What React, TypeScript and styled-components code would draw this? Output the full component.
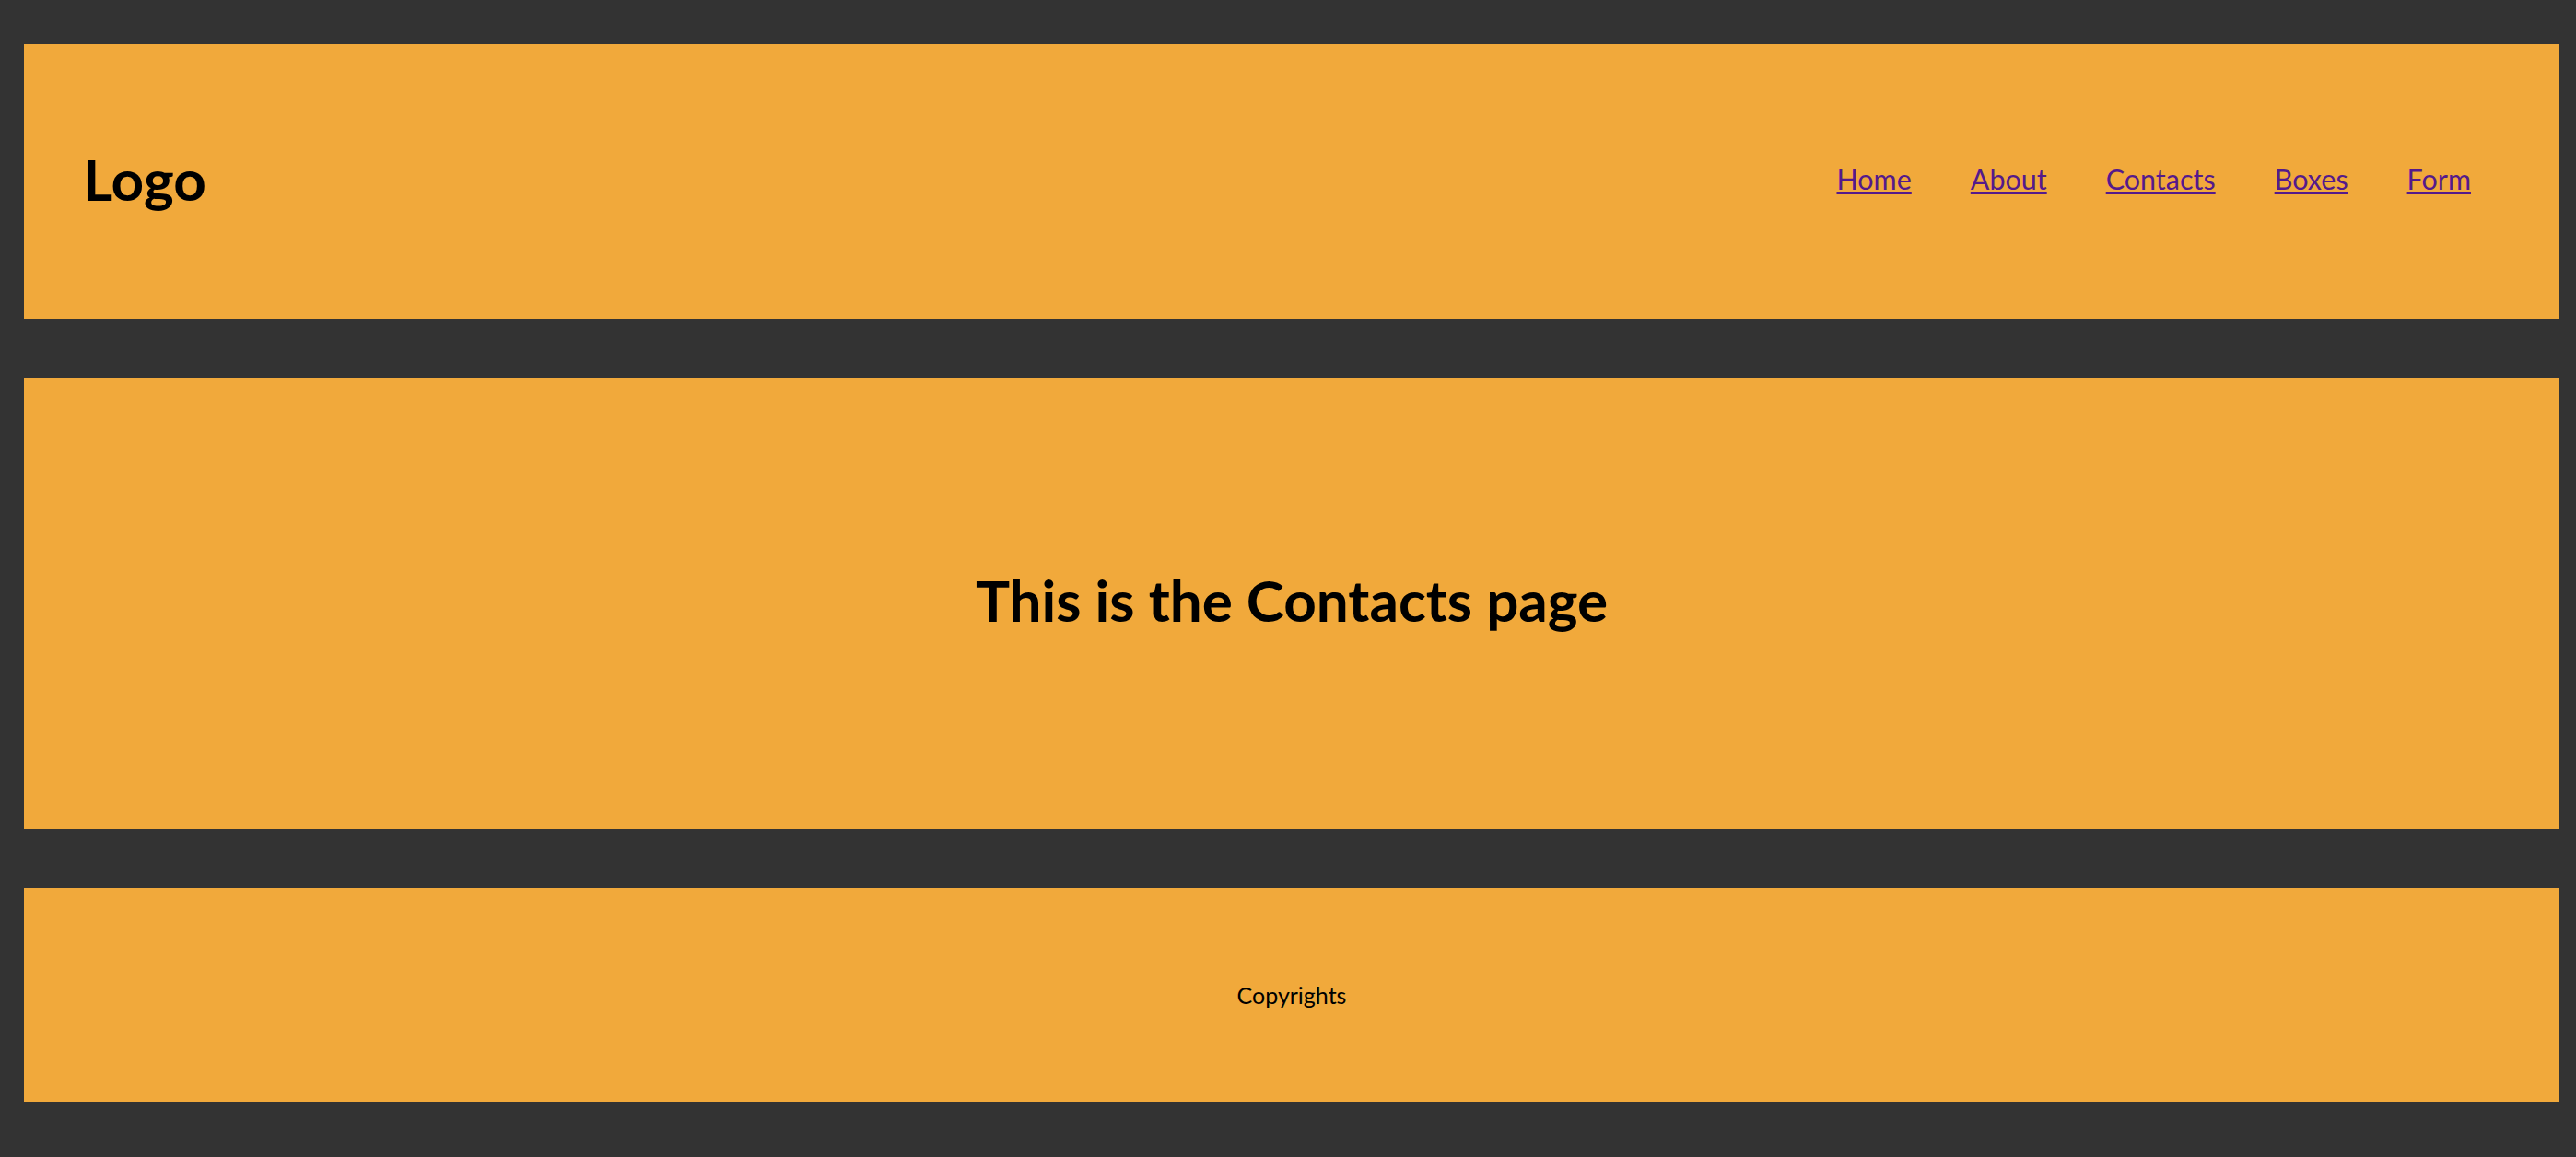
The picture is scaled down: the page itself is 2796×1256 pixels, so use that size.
import React from "react";
import styled, { createGlobalStyle } from "styled-components";

const GlobalStyle = createGlobalStyle`
  html, body {
    margin: 0;
    padding: 0;
    background: #333333;
  }
  body {
    font-family: Lato, "Open Sans", sans-serif;
  }
`;

const Page = styled.div`
  display: flex;
  flex-direction: column;
  gap: 64px;
  padding: 48px 18px 0 26px;
`;

const Panel = styled.div<{ $height: number }>`
  background: #f1a93b;
  height: ${(p) => p.$height}px;
  box-sizing: border-box;
`;

const Header = styled(Panel).attrs({ as: "header" })`
  display: flex;
  align-items: center;
  justify-content: space-between;
  padding: 0 96px 0 64px;
`;

const Logo = styled.div`
  font-size: 62px;
  font-weight: 700;
  color: #000;
  margin-top: -6px;
`;

const Nav = styled.nav`
  display: flex;
  gap: 64px;
  margin-top: -6px;
`;

const NavLink = styled.a`
  font-size: 30.5px;
  color: #551a8b;
  text-decoration: underline;
`;

const Main = styled(Panel).attrs({ as: "main" })`
  display: flex;
  align-items: center;
  justify-content: center;
`;

const Title = styled.h1`
  margin: -8px 0 0;
  font-size: 62px;
  font-weight: 700;
  color: #000;
`;

const Footer = styled(Panel).attrs({ as: "footer" })`
  display: flex;
  align-items: center;
  justify-content: center;
`;

const FooterText = styled.p`
  margin: 0;
  font-size: 25px;
  color: #000;
`;

const links = ["Home", "About", "Contacts", "Boxes", "Form"];

export default function App() {
  return (
    <>
      <GlobalStyle />
      <Page>
        <Header $height={298}>
          <Logo>Logo</Logo>
          <Nav>
            {links.map((l) => (
              <NavLink key={l} href="#">
                {l}
              </NavLink>
            ))}
          </Nav>
        </Header>
        <Main $height={490}>
          <Title>This is the Contacts page</Title>
        </Main>
        <Footer $height={232}>
          <FooterText>Copyrights</FooterText>
        </Footer>
      </Page>
    </>
  );
}
